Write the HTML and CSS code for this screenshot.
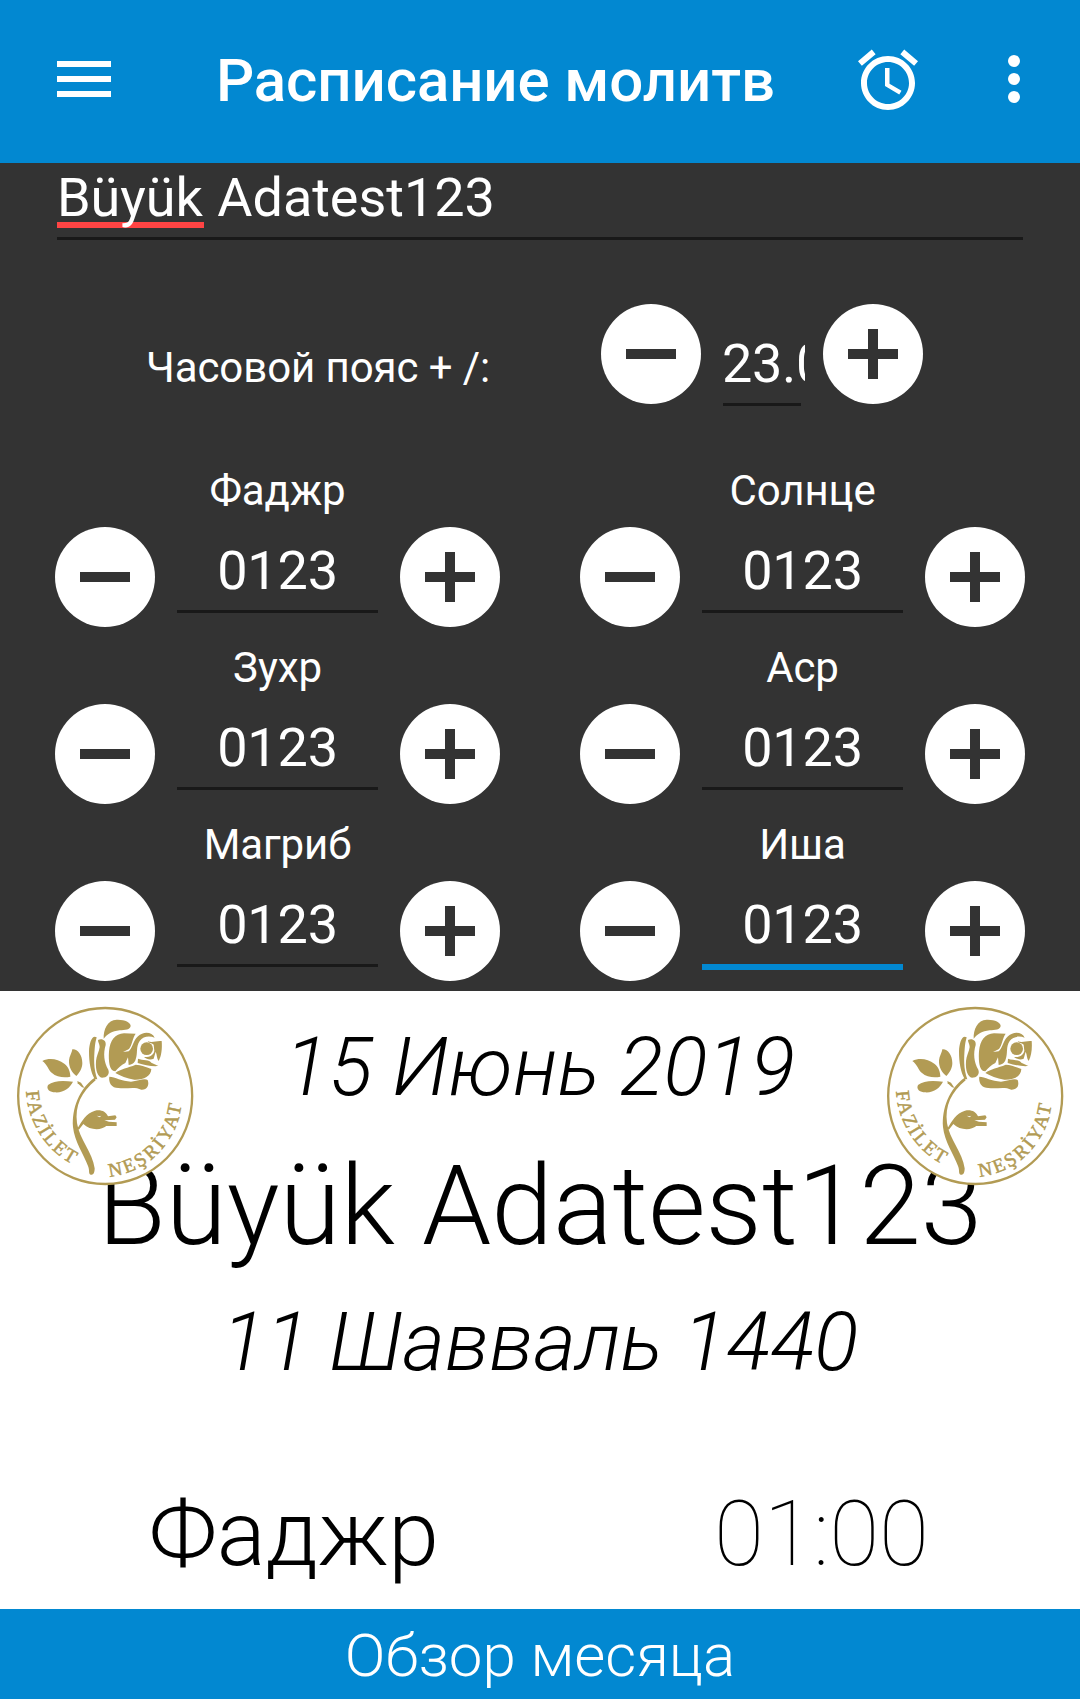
FILE: index.html
```html
<!DOCTYPE html>
<html lang="ru">
<head>
<meta charset="utf-8">
<title>Расписание молитв</title>
<link rel="stylesheet" href="styles.css">
</head>
<body>
<svg class="defs" width="0" height="0" aria-hidden="true">
  <symbol id="minus" viewBox="0 0 100 100"><path d="M25 45h50v10H25z"/></symbol>
  <symbol id="plus" viewBox="0 0 100 100"><path d="M25 45h20V25h10v20h20v10H55v20H45V55H25z"/></symbol>
  <symbol id="logo" viewBox="48 48 534 540">
    <ellipse cx="315.500" cy="318" rx="261" ry="264" fill="#fff" stroke="#b29b54" stroke-width="7"/>
    <g fill="#b29b54">
      <path d="M311 146C310 118 322 90 350 89C374 88 391 97 392 107C392 119 374 120 359 121C336 124 322 132 311 146Z"/>
      <path d="M290 142C276 133 268 158 267 184C267 218 272 247 284 267L292 268C280 236 282 204 284 177C285 162 287 153 290 142Z"/>
      <path d="M294 150C306 144 319 151 317 165C309 190 312 218 325 239C330 253 320 263 306 263C293 261 286 241 288 213C289 197 298 184 299 171C299 162 294 158 294 150Z"/>
      <path d="M327 184C330 151 345 131 372 130L407 131C397 145 397 163 387 177L369 186L386 184C397 177 399 151 414 139C431 122 457 126 464 143C448 137 429 139 419 153C407 171 414 190 407 208C404 220 395 224 386 225L384 202L376 219C365 224 355 233 346 244C328 245 325 214 327 184Z"/>
      <path d="M443 153C457 160 468 151 485 153C487 176 484 199 476 213C470 205 471 194 467 185L461 206C451 211 439 207 432 201C449 202 461 195 463 182L461 164C454 158 447 161 443 153Z"/>
      <ellipse cx="440" cy="176" rx="19" ry="19"/>
      <path d="M414 206C428 211 449 209 454 218L475 228C456 230 433 225 413 219Z"/>
      <path d="M346 249C362 236 384 234 407 224C424 225 437 230 454 237C453 260 430 270 403 269C380 266 361 257 346 249Z"/>
      <path d="M328 260C345 261 365 273 393 275C414 274 432 264 443 270C449 286 441 300 424 299C404 289 383 297 355 294C335 294 325 278 328 260Z"/>
      <path d="M127 213C148 202 174 207 193 221C206 231 211 246 211 260C193 265 169 261 156 249C144 239 141 222 127 213Z"/>
      <path d="M217 178C232 176 247 195 247 219C247 235 239 248 229 258C215 248 206 231 207 211C208 199 216 188 217 178Z"/>
      <path d="M144 285C160 271 190 271 219 275C210 293 191 309 165 307C152 307 137 299 144 285Z"/>
      <path d="M232 273L243 278L253 293L246 292L233 280Z"/>
      <path d="M284 263L287 271C244 306 224 348 231 399C238 449 278 486 284 535C284 548 280 556 273 554C264 553 270 542 264 528C252 495 223 454 219 411C215 355 238 295 284 263Z"/>
      <path d="M233 414C246 393 258 369 285 362C302 358 318 364 324 379L346 376L350 382L345 389L313 391L327 395L350 397L350 408L319 408C303 422 269 421 250 402L236 420Z"/>
    </g>
    <path d="M290 377l9 2 5-2-5 5z" fill="#fff"/>
    <path id="arc-left" fill="none" d="M78 304C83 396 139 489 232 529"/>
    <path id="arc-right" fill="none" d="M328 560C446 549 541 453 547 318"/>
    <text class="logo-text"><textPath href="#arc-left" textLength="270">FAZİLET</textPath></text>
    <text class="logo-text"><textPath href="#arc-right" textLength="330">NEŞRİYAT</textPath></text>
  </symbol>
</svg>

<header class="app-bar">
  <svg class="menu-icon" viewBox="0 0 54 36"><path d="M0 0h54v6H0zM0 15h54v6H0zM0 30h54v6H0z"/></svg>
  <h1 class="app-title">Расписание молитв</h1>
  <svg class="alarm-icon" viewBox="0 0 24 24"><path d="M22 5.720l-4.600-3.860-1.290 1.530 4.600 3.860L22 5.720zM7.880 3.390L6.600 1.860 2 5.710l1.290 1.530 4.590-3.850zM12.500 8H11v6l4.750 2.850.75-1.230-4-2.370V8zM12 4c-4.970 0-9 4.030-9 9s4.020 9 9 9c4.970 0 9-4.030 9-9s-4.030-9-9-9zm0 16c-3.870 0-7-3.130-7-7s3.130-7 7-7 7 3.130 7 7-3.130 7-7 7z"/></svg>
  <svg class="more-icon" viewBox="0 0 12 48"><circle cx="6" cy="6" r="6"/><circle cx="6" cy="24" r="6"/><circle cx="6" cy="42" r="6"/></svg>
</header>

<section class="settings">
  <div class="name-field"><span class="misspelled">Büyük</span> Adatest123</div>

  <div class="zone">
    <span class="zone-label">Часовой пояс + /:</span>
    <div class="round"><svg><use href="#minus"/></svg></div>
    <div class="zone-value"><span>23.0</span></div>
    <div class="round"><svg><use href="#plus"/></svg></div>
  </div>

  <div class="grid">
    <div class="prayer">
      <div class="label">Фаджр</div>
      <div class="stepper"><div class="round"><svg><use href="#minus"/></svg></div><div class="value">0123</div><div class="round"><svg><use href="#plus"/></svg></div></div>
    </div>
    <div class="prayer">
      <div class="label">Солнце</div>
      <div class="stepper"><div class="round"><svg><use href="#minus"/></svg></div><div class="value">0123</div><div class="round"><svg><use href="#plus"/></svg></div></div>
    </div>
    <div class="prayer">
      <div class="label">Зухр</div>
      <div class="stepper"><div class="round"><svg><use href="#minus"/></svg></div><div class="value">0123</div><div class="round"><svg><use href="#plus"/></svg></div></div>
    </div>
    <div class="prayer">
      <div class="label">Аср</div>
      <div class="stepper"><div class="round"><svg><use href="#minus"/></svg></div><div class="value">0123</div><div class="round"><svg><use href="#plus"/></svg></div></div>
    </div>
    <div class="prayer">
      <div class="label">Магриб</div>
      <div class="stepper"><div class="round"><svg><use href="#minus"/></svg></div><div class="value">0123</div><div class="round"><svg><use href="#plus"/></svg></div></div>
    </div>
    <div class="prayer">
      <div class="label">Иша</div>
      <div class="stepper"><div class="round"><svg><use href="#minus"/></svg></div><div class="value focused">0123</div><div class="round"><svg><use href="#plus"/></svg></div></div>
    </div>
  </div>
</section>

<main class="day">
  <svg class="logo logo-start"><use href="#logo"/></svg>
  <svg class="logo logo-end"><use href="#logo"/></svg>
  <div class="date">15 Июнь 2019</div>
  <h2 class="city">Büyük Adatest123</h2>
  <div class="date hijri">11 Шавваль 1440</div>
  <div class="time-row"><span class="time-name">Фаджр</span><span class="time-value">01:00</span></div>
</main>

<footer class="month">Обзор месяца</footer>
</body>
</html>
```
FILE: styles.css
```css
* { box-sizing: border-box; }

body {
  margin: 0;
  width: 1080px;
  height: 1699px;
  display: flex;
  flex-direction: column;
  overflow: hidden;
  background: #fff;
  font-family: Roboto, sans-serif;
  color: #000;
}

.defs { position: absolute; }

.app-bar {
  height: 163px;
  flex: none;
  display: flex;
  align-items: center;
  padding: 0 60px 5px 57px;
  background: #0288d1;
  color: #fff;
}
.app-bar svg { fill: currentColor; flex: none; }
.menu-icon { width: 54px; height: 36px; }
.app-title {
  margin: 4px 0 0 105px;
  width: 636px;
  font-size: 60px;
  font-weight: 500;
  line-height: 72px;
  letter-spacing: -0.1px;
  white-space: nowrap;
}
.alarm-icon { width: 72px; height: 72px; margin-top: 2px; }
.more-icon { width: 12px; height: 48px; margin-left: 84px; }

.settings {
  height: 828px;
  flex: none;
  background: #333;
  color: #fff;
  font-size: 54px;
}

.name-field {
  margin: 0 57px;
  height: 77px;
  padding-top: 3px;
  border-bottom: 3px solid #191919;
  line-height: 64px;
  letter-spacing: -0.05px;
}
.misspelled {
  display: inline-block;
  width: 147px;
  height: 62px;
  border-bottom: 6px solid #f44;
}

.zone {
  height: 106px;
  margin: 64px 0 0 146px;
  display: flex;
  align-items: flex-start;
}
.zone-label {
  width: 455px;
  padding-top: 39px;
  font-size: 42px;
  line-height: 50px;
  letter-spacing: -0.08px;
}
.zone-value {
  width: 83px;
  height: 102px;
  margin: 0 18px 0 21px;
  padding-top: 28px;
  overflow: hidden;
  line-height: 64px;
  letter-spacing: -0.3px;
  background: linear-gradient(#191919, #191919) 1px 99px / 78px 3px no-repeat;
}

.round {
  width: 100px;
  height: 100px;
  flex: none;
  border-radius: 50%;
  background: #fff;
}
.round svg {
  display: block;
  width: 100px;
  height: 100px;
  fill: #333;
}

.grid {
  display: grid;
  grid-template-columns: 445px 445px;
  grid-auto-rows: 177px;
  column-gap: 80px;
  margin: 55px 0 0 55px;
}
.label {
  height: 62px;
  padding: 1px 0 0;
  font-size: 42px;
  line-height: 50px;
  letter-spacing: -0.08px;
  text-align: center;
}
.stepper { display: flex; justify-content: space-between; }
.value {
  width: 201px;
  height: 86px;
  padding: 12px 0 0;
  border-bottom: 3px solid #191919;
  line-height: 64px;
  letter-spacing: -0.2px;
  text-align: center;
}
.value.focused { height: 89px; border-bottom: 6px solid #0288d1; }

.day {
  position: relative;
  height: 618px;
  flex: none;
  padding-top: 28px;
}
.logo { position: absolute; z-index: 1; top: 15px; width: 178px; height: 180px; }
.logo-start { left: 16px; }
.logo-end { left: 886px; }
.logo-text {
  font-family: "Liberation Serif", serif;
  font-size: 58px;
  fill: #b29b54;
  stroke: #b29b54;
  stroke-width: 1.5px;
}
.date {
  font-size: 81.6px;
  font-style: italic;
  font-weight: 300;
  line-height: 96px;
  text-align: center;
}
.city {
  margin: 0;
  padding-top: 26px;
  font-size: 111px;
  font-weight: 300;
  line-height: 130px;
  text-align: center;
}
.hijri { padding-top: 23px; }
.time-row { display: flex; line-height: 110px; padding: 89px 0 0 149px; }
.time-name { width: 565px; font-size: 91.3px; font-weight: 300; }
.time-value { font-size: 91.3px; font-weight: 100; letter-spacing: -0.3px; }

.month {
  height: 90px;
  flex: none;
  background: #0288d1;
  color: #fff;
  font-size: 60px;
  font-weight: 300;
  line-height: 94px;
  text-align: center;
}
```
